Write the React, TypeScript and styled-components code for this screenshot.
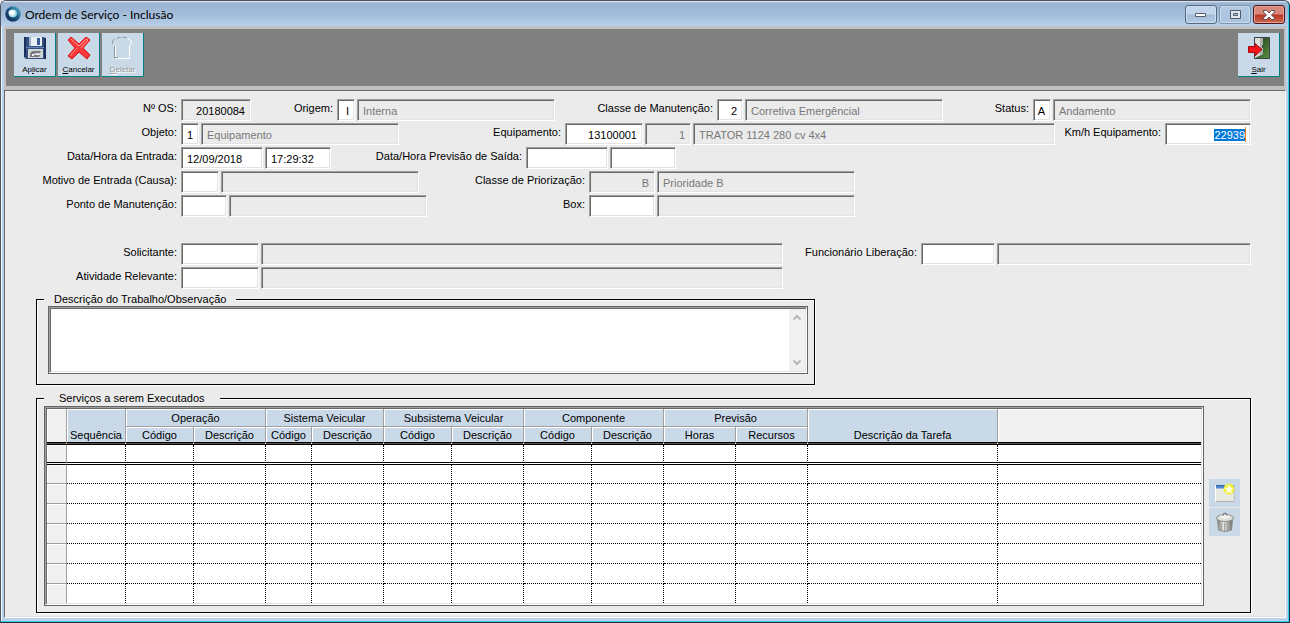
import React, { useEffect, useRef } from 'react';
import styled, { createGlobalStyle, css } from 'styled-components';

const color = {
  face: '#ebebeb',
  button: '#c9d9e8',
  strip: '#c0c0c0',
  toolbar: '#808080',
  shadow: '#a0a0a0',
  darkShadow: '#696969',
  light: '#e3e3e3',
};

const GlobalStyle = createGlobalStyle`
  * { box-sizing: border-box; }
  body { margin: 0; background: ${color.face}; }
  body, button, input, textarea { font: 11px/14px "Liberation Sans", Arial, sans-serif; color: #000; }
`;

const sunken = css`
  border: 1px solid;
  border-color: ${color.shadow} #fff #fff ${color.shadow};
  box-shadow: inset 1px 1px 0 ${color.darkShadow}, inset -1px -1px 0 ${color.light};
`;

/* ---------- window ---------- */

const Window = styled.div`
  min-height: 100vh;
  display: flex;
  flex-direction: column;
  border: 1px solid #4d5560;
  border-right-color: #20303c;
  border-bottom-color: #20303c;
  border-radius: 6px 6px 0 0;
  background: #b9d1ea;
  box-shadow: inset -1px -1px 0 #35cdee, inset 1px 0 0 #eef4fb;
  padding: 0 3px 4px 3px;
`;

const TitleBar = styled.header`
  display: flex;
  align-items: center;
  height: 25px;
  margin: 0 -2px 0 -3px;
  padding: 0 3px 0 4px;
  gap: 4px;
  border-radius: 5px 5px 0 0;
  background: linear-gradient(#e8eff7 0, #9ab3d1 2px, #a5bedb 60%, #b7d0ea);
`;

const Title = styled.h1`
  margin: 0;
  flex: 1;
  padding-top: 3px;
  font: 12px/16px Lato, "Open Sans", sans-serif;
`;

const Caption = styled.div`
  display: flex;
  gap: 2px;
  padding-top: 2px;
`;

const CaptionButton = styled.button<{ $tone?: 'close' | 'dim' }>`
  display: flex;
  align-items: center;
  justify-content: center;
  width: 32px;
  height: 19px;
  padding: 0;
  border: 1px solid ${p => (p.$tone === 'close' ? '#4f1418' : p.$tone === 'dim' ? '#7e93ad' : '#56697f')};
  border-radius: 3px;
  box-shadow: inset 0 0 0 1px ${p => (p.$tone === 'close' ? '#e3a39a' : '#c9dcf0')};
  background: ${p =>
    p.$tone === 'close'
      ? 'linear-gradient(#d8897c 0 48%, #b73422 52%, #cf6a50)'
      : p.$tone === 'dim'
      ? 'linear-gradient(#b3c9e3, #abc4e0)'
      : 'linear-gradient(#c3d5ea 0 48%, #a2bbd8 52%, #b6cde6)'};
`;

const Strip = styled.div`
  background: ${color.strip};
  padding: 3px 2px 4px;
`;

const Toolbar = styled.div`
  display: flex;
  gap: 2px;
  height: 57px;
  padding: 4px 4px 0 8px;
  background: ${color.toolbar};
`;

const ToolButton = styled.button<{ $end?: boolean }>`
  display: flex;
  flex-direction: column;
  align-items: center;
  width: 42px;
  height: 44px;
  margin-left: ${p => (p.$end ? 'auto' : '0')};
  padding: 3px 0 0;
  border: 0 solid #008080;
  border-width: 0 1px 1px 0;
  background: ${color.button};
  font-size: 8px;
  line-height: 10px;
  gap: 5px;
  &:disabled { color: #999; text-shadow: 1px 1px 0 #fff; }
`;

const Panel = styled.main`
  flex: 1;
  padding: 8px 34px 4px 31px;
  background: ${color.face};
  border: 1px solid;
  border-color: ${color.darkShadow} #fff #fff ${color.darkShadow};
  box-shadow: inset -1px -1px 0 ${color.light};
`;

/* ---------- form ---------- */

const Rows = styled.div`
  display: flex;
  flex-direction: column;
  gap: 2px;
`;

const Row = styled.div`
  display: flex;
  height: 22px;
`;

const Split = styled.div`
  display: grid;
  grid-template-columns: minmax(0, 1fr) 468px;
  row-gap: 2px;
  margin-top: 26px;
`;

const Group = styled.div<{ $end?: boolean; $grow?: boolean }>`
  display: flex;
  gap: 2px;
  margin-left: ${p => (p.$end ? 'auto' : '0')};
  flex: ${p => (p.$grow ? '1 1 0' : '0 0 auto')};
`;

const Label = styled.label<{ $w: number }>`
  width: ${p => p.$w}px;
  padding-right: 2px;
  line-height: 18px;
  text-align: right;
  white-space: nowrap;
`;

const Field = styled.input<{ $w?: number; $right?: boolean; $locked?: boolean }>`
  ${sunken}
  width: ${p => (p.$w ? `${p.$w}px` : '0')};
  flex: ${p => (p.$w ? '0 0 auto' : '1 1 0')};
  min-width: 0;
  height: 22px;
  margin: 0;
  padding: ${p => (p.$right ? '2px 5px 0 1px' : '2px 1px 0 5px')};
  border-radius: 0;
  outline: 0;
  background: ${p => (p.$locked ? color.face : '#fff')};
  line-height: 15px;
  text-align: ${p => (p.$right ? 'right' : 'left')};
  &:disabled { color: #787878; }
  &::selection { background: #0078d7; color: #fff; }
`;

const FocusField = styled(Field)`
  background: linear-gradient(#f58220, #f58220) right 4px center / 1px 15px no-repeat #fff;
`;

const Box = styled.fieldset<{ $rightGap?: number; $pad: string; $top: number }>`
  margin: ${p => p.$top}px ${p => p.$rightGap ?? 0}px 0 0;
  min-width: 0;
  padding: ${p => p.$pad};
  border: 1px solid #000;
  box-shadow: 1px 1px 0 #fff, inset 1px 1px 0 #fff;
`;

const Legend = styled.legend<{ $inset: number }>`
  height: 13px;
  padding: 0 ${p => p.$inset}px;
  background: ${color.face};
  line-height: 13px;
`;

const Frame = styled.div<{ $indent?: number }>`
  display: flex;
  flex: 1;
  min-width: 0;
  margin-left: ${p => p.$indent ?? 0}px;
  border: 1px solid #646464;
`;

const Well = styled.div`
  ${sunken}
  display: flex;
  flex: 1;
  min-width: 0;
  padding: 1px;
  background: #fff;
`;

const Notes = styled.textarea`
  flex: 1;
  height: 62px;
  border: 0;
  padding: 2px 4px;
  resize: none;
  outline: 0;
  overflow: hidden;
`;

const Scroll = styled.div`
  display: flex;
  flex-direction: column;
  justify-content: space-between;
  align-items: center;
  width: 16px;
  padding: 5px 0;
  background: #f0f0f0;
`;

/* ---------- grid ---------- */

const GridArea = styled.div`
  display: flex;
  gap: 5px;
`;

const SideButtons = styled.div`
  display: flex;
  flex-direction: column;
  gap: 1px;
  padding-top: 73px;
`;

const SideButton = styled.button`
  display: flex;
  align-items: center;
  justify-content: center;
  width: 31px;
  height: 28px;
  padding: 0;
  border: 0;
  background: ${color.button};
`;

const Table = styled.table`
  width: 100%;
  table-layout: fixed;
  border-spacing: 0;
  th, td { padding: 0; font-weight: normal; overflow: hidden; white-space: nowrap; }
`;

const Head = styled.th<{ $last?: boolean; $blank?: boolean; $low?: boolean }>`
  --fill: ${p => (p.$blank ? '#f0f0f0' : color.button)};
  height: 18px;
  line-height: 14px;
  border-right: ${p => (p.$blank && p.$low ? '0' : `1px solid ${color.shadow}`)};
  border-bottom: ${p => (p.$last ? '3px double #000' : `1px solid ${color.shadow}`)};
  background: linear-gradient(var(--fill), var(--fill)) padding-box, linear-gradient(#5c5048, #5c5048) border-box;
  box-shadow: inset 1px 1px 0 #fff;
  vertical-align: ${p => (p.$low ? 'bottom' : 'middle')};
`;

const RowHead = styled.th<{ $current?: boolean; $h: number }>`
  height: ${p => p.$h}px;
  background: #f0f0f0;
  border-right: 1px solid ${color.shadow};
  border-bottom: ${p => (p.$current ? '3px double #000' : `1px solid ${color.shadow}`)};
  box-shadow: inset 1px 1px 0 #fff;
  tr:last-child > & { border-bottom: 0; }
`;

const Cell = styled.td<{ $current?: boolean }>`
  border-right: 1px dotted #000;
  border-bottom: ${p => (p.$current ? '3px double #000' : '1px dotted #000')};
  &:last-child { border-right: 0; }
  tr:last-child > & { border-bottom: 0; }
`;

/* ---------- icons ---------- */

const AppIcon = () => (
  <svg width="16" height="16" viewBox="0 0 16 16" aria-hidden="true">
    <defs>
      <linearGradient id="ring" x1="0" y1="1" x2="1" y2="0">
        <stop offset="0" stopColor="#0b1f4d" />
        <stop offset=".55" stopColor="#1f5a86" />
        <stop offset="1" stopColor="#5cc0d6" />
      </linearGradient>
      <radialGradient id="core" cx=".4" cy=".4" r=".6">
        <stop offset=".3" stopColor="#fff" />
        <stop offset="1" stopColor="#7fd0e0" />
      </radialGradient>
    </defs>
    <circle cx="8" cy="8" r="7.7" fill="url(#ring)" />
    <path d="M3.500 5.500Q5 3 8.500 3.500Q12 4 12 7.500Q12 11 8.500 11.500Q5 11.500 4 9Q3.200 7 3.500 5.500Z" fill="url(#core)" />
  </svg>
);

const SaveIcon = () => (
  <svg width="24" height="24" viewBox="0 0 24 24" aria-hidden="true">
    <path d="M1 1h20l2 2v20H3l-2-2z" fill="#33507f" />
    <path d="M1 1h2v20H1zM21 2h2v21h-2z" fill="#1d2f5c" />
    <path d="M6 1h13v9H6z" fill="#e9edf4" />
    <path d="M6 1h2v9H6z" fill="#9fb0cb" />
    <path d="M14 2h3v7h-3z" fill="#3a5c93" />
    <path d="M3 11h18v1H3z" fill="#6583b4" />
    <path d="M5 13h15v9H5z" fill="#d0d3d5" />
    <path d="M7 20c0-4 2-5 4-5h7l-1 2h-5l-2 2h7l-1 2H7z" fill="#77797c" />
    <path d="M9 18h2v2H9zM13 18h3v1h-3z" fill="#f5f5f5" />
  </svg>
);

const CancelIcon = () => (
  <svg width="24" height="24" viewBox="0 0 24 24" aria-hidden="true">
    <path
      d="M4 1L12 8L19 1L23 4L16 12L23 19L20 23L12 16L5 23L1 20L8 12L1 4Z"
      fill="#fb3b3b"
      stroke="#d90d12"
      strokeLinejoin="round"
    />
    <path d="M4 3L12 10L19 3L21 4L14 12" fill="none" stroke="#ff9b96" />
    <path d="M10 12L3 20" fill="none" stroke="#ff8580" />
  </svg>
);

const DeleteIcon = () => (
  <svg width="24" height="24" viewBox="0 0 24 24" fill="none" aria-hidden="true">
    <path d="M3.500 22V9.500L1.500 7.500V5L4 2.500M3.500 21.500H7" stroke="#8f979e" />
    <path d="M6 2.500L8 1.500H17" stroke="#8f979e" strokeDasharray="4 2" />
    <path d="M17 2.500L20 4.500V8.500L18.500 10V22.500H5M2.500 8L4.500 10V21" stroke="#fff" />
  </svg>
);

const ExitIcon = () => (
  <svg width="24" height="24" viewBox="0 0 24 24" aria-hidden="true">
    <defs>
      <linearGradient id="glass" x1="0" y1="0" x2="1" y2="1">
        <stop offset="0" stopColor="#16301a" />
        <stop offset="1" stopColor="#5c9440" />
      </linearGradient>
    </defs>
    <path d="M7.500 1.500h15v21h-15z" fill="url(#glass)" stroke="#3d4147" />
    <path d="M8 2h8v16l-8 4z" fill="#dcdcd8" />
    <path d="M13 2h3v16l-3 1z" fill="#aeb0ae" />
    <path d="M15 9h1v3h-1z" fill="#4c4c4c" />
    <path d="M1.500 10.500H8V7.500L15 13.500L8 20V16.500H1.500Z" fill="#f3151a" stroke="#a30a10" />
  </svg>
);

const NewIcon = () => (
  <svg width="20" height="20" viewBox="0 0 20 20" aria-hidden="true">
    <path d="M.5 2.500h18v16H.5z" fill="#e9e9e4" stroke="#fff" />
    <path d="M1 18.500h18V3" fill="none" stroke="#b3b3ad" />
    <path d="M1 2h18v3.500H1z" fill="#4e86cf" />
    <path d="M1 2h12v1H1z" fill="#2f62ad" />
    <circle cx="14" cy="6" r="5.500" fill="#f2ef3c" />
    <path d="M14 1.500L15.400 4.500L18.500 5L16.200 7.200L16.800 10.500L14 9L11.200 10.500L11.800 7.200L9.500 5L12.600 4.500Z" fill="#fffee0" />
  </svg>
);

const TrashIcon = () => (
  <svg width="20" height="22" viewBox="0 0 20 22" aria-hidden="true">
    <defs>
      <linearGradient id="tin">
        <stop offset="0" stopColor="#7d7d7b" />
        <stop offset=".4" stopColor="#e4e4e1" />
        <stop offset="1" stopColor="#6d6d6b" />
      </linearGradient>
    </defs>
    <path d="M2.500 8h15l-1 11q-6.500 3-13 0z" fill="url(#tin)" stroke="#8a8a88" />
    <path d="M6.500 12v7M9.500 12v8M12.500 12v7" stroke="#a5a5a2" />
    <ellipse cx="10" cy="7" rx="8.500" ry="3.500" fill="#dededb" stroke="#8b8b88" />
    <ellipse cx="10" cy="5.500" rx="5" ry="2" fill="#f2f2f0" />
    <path d="M8 5V3q2-2 4 0v2" fill="none" stroke="#70706e" />
  </svg>
);

const Chevron = ({ down }: { down?: boolean }) => (
  <svg width="8" height="7" viewBox="0 0 8 7" fill="none" aria-hidden="true">
    <path d={down ? 'M.5 1.500L4 5L7.500 1.500' : 'M.5 5.500L4 2L7.500 5.500'} stroke="#b8b8b8" strokeWidth="2" />
  </svg>
);

/* ---------- data ---------- */

const columnWidths = [20, 59, 68, 72, 46, 72, 68, 72, 68, 72, 72, 72, 190];

const bands: [string, string, string][] = [
  ['Operação', 'Código', 'Descrição'],
  ['Sistema Veicular', 'Código', 'Descrição'],
  ['Subsistema Veicular', 'Código', 'Descrição'],
  ['Componente', 'Código', 'Descrição'],
  ['Previsão', 'Horas', 'Recursos'],
];

const rowHeights = [20, 19, 20, 20, 20, 20, 20, 19];

type Part = { w?: number; value?: string; right?: boolean; locked?: boolean; disabled?: boolean; focus?: boolean };

function Entry({ id, label, labelWidth, parts, end, grow }: {
  id: string; label: string; labelWidth: number; parts: Part[]; end?: boolean; grow?: boolean;
}) {
  const focused = useRef<HTMLInputElement>(null);
  useEffect(() => {
    focused.current?.focus();
    focused.current?.select();
  }, []);
  return (
    <Group $end={end} $grow={grow}>
      <Label $w={labelWidth} htmlFor={`${id}-0`}>{label}</Label>
      {parts.map((p, i) => {
        const Control = p.focus ? FocusField : Field;
        return (
          <Control
            key={i}
            id={`${id}-${i}`}
            ref={p.focus ? focused : undefined}
            aria-label={i ? `${label} ${i + 1}` : undefined}
            defaultValue={p.value ?? ''}
            readOnly={p.locked}
            disabled={p.disabled}
            $w={p.w}
            $right={p.right}
            $locked={p.locked || p.disabled}
          />
        );
      })}
    </Group>
  );
}

export default function App() {
  return (
    <Window>
      <GlobalStyle />
      <TitleBar>
        <AppIcon />
        <Title>Ordem de Serviço - Inclusão</Title>
        <Caption>
          <CaptionButton aria-label="Minimizar">
            <svg width="12" height="6" viewBox="0 0 12 6"><path d="M.5 1.500h10v3H.5z" fill="#fff" stroke="#555c68" /></svg>
          </CaptionButton>
          <CaptionButton $tone="dim" aria-label="Maximizar">
            <svg width="11" height="9" viewBox="0 0 11 9" fill="none">
              <path d="M.5 .5h10v8H.5z" fill="#dfe6ee" stroke="#535b6b" />
              <path d="M3.500 3.500h4v2h-4z" fill="#b0c6e0" stroke="#535b6b" />
            </svg>
          </CaptionButton>
          <CaptionButton $tone="close" aria-label="Fechar">
            <svg width="12" height="10" viewBox="0 0 12 10">
              <path d="M.5 .5h3L6 3L8.500 .5h3V2L8.500 5L11.500 8v1.500h-3L6 7L3.500 9.500h-3V8L3.500 5L.5 2Z" fill="#fff" stroke="#5a4a50" />
            </svg>
          </CaptionButton>
        </Caption>
      </TitleBar>

      <Strip>
        <Toolbar>
          <ToolButton><SaveIcon /><span>Ap<u>l</u>icar</span></ToolButton>
          <ToolButton><CancelIcon /><span><u>C</u>ancelar</span></ToolButton>
          <ToolButton disabled><DeleteIcon /><span><u>D</u>eletar</span></ToolButton>
          <ToolButton $end><ExitIcon /><span><u>S</u>air</span></ToolButton>
        </Toolbar>
      </Strip>

      <Panel>
        <Rows>
          <Row>
            <Entry id="os" label="Nº OS:" labelWidth={143} parts={[{ w: 70, value: '20180084', right: true, locked: true }]} />
            <Entry id="origem" label="Origem:" labelWidth={84} parts={[{ w: 18, value: 'I', right: true }, { w: 198, value: 'Interna', disabled: true }]} />
            <Entry id="classe" label="Classe de Manutenção:" labelWidth={160} parts={[{ w: 26, value: '2', right: true }, { w: 198, value: 'Corretiva Emergêncial', disabled: true }]} />
            <Entry id="status" end label="Status:" labelWidth={80} parts={[{ w: 18, value: 'A', right: true }, { w: 198, value: 'Andamento', disabled: true }]} />
          </Row>
          <Row>
            <Entry id="objeto" label="Objeto:" labelWidth={143} parts={[{ w: 18, value: '1', right: true }, { w: 198, value: 'Equipamento', disabled: true }]} />
            <Entry id="equip" grow label="Equipamento:" labelWidth={164} parts={[{ w: 78, value: '13100001', right: true }, { w: 46, value: '1', right: true, disabled: true }, { value: 'TRATOR 1124 280 cv 4x4', disabled: true }]} />
            <Entry id="km" label="Km/h Equipamento:" labelWidth={108} parts={[{ w: 86, value: '22939', right: true, focus: true }]} />
          </Row>
          <Row>
            <Entry id="entrada" label="Data/Hora da Entrada:" labelWidth={143} parts={[{ w: 82, value: '12/09/2018' }, { w: 66, value: '17:29:32' }]} />
            <Entry id="saida" label="Data/Hora Previsão de Saída:" labelWidth={193} parts={[{ w: 82 }, { w: 66 }]} />
          </Row>
          <Row>
            <Entry id="motivo" label="Motivo de Entrada (Causa):" labelWidth={143} parts={[{ w: 38 }, { w: 198, disabled: true }]} />
            <Entry id="prioridade" label="Classe de Priorização:" labelWidth={168} parts={[{ w: 66, value: 'B', right: true, disabled: true }, { w: 198, value: 'Prioridade B', disabled: true }]} />
          </Row>
          <Row>
            <Entry id="ponto" label="Ponto de Manutenção:" labelWidth={143} parts={[{ w: 46 }, { w: 198, disabled: true }]} />
            <Entry id="box" label="Box:" labelWidth={160} parts={[{ w: 66 }, { w: 198, disabled: true }]} />
          </Row>
        </Rows>

        <Split>
          <Entry id="solicitante" grow label="Solicitante:" labelWidth={143} parts={[{ w: 78 }, { disabled: true }]} />
          <Entry id="liberacao" grow label="Funcionário Liberação:" labelWidth={136} parts={[{ w: 74 }, { disabled: true }]} />
          <Entry id="atividade" grow label="Atividade Relevante:" labelWidth={143} parts={[{ w: 78 }, { disabled: true }]} />
        </Split>

        <Box $top={4} $rightGap={436} $pad="0 6px 10px 7px">
          <Legend $inset={10}>Descrição do Trabalho/Observação</Legend>
          <Frame $indent={4}>
            <Well>
              <Notes aria-label="Descrição do Trabalho/Observação" />
              <Scroll><Chevron /><Chevron down /></Scroll>
            </Well>
          </Frame>
        </Box>

        <Box $top={7} $pad="1px 10px 6px 7px">
          <Legend $inset={15}>Serviços a serem Executados</Legend>
          <GridArea>
            <Frame>
              <Well>
                <Table>
                  <colgroup>
                    {columnWidths.map((w, i) => <col key={i} width={w} />)}
                    <col />
                  </colgroup>
                  <thead>
                    <tr>
                      <Head rowSpan={2} $blank $last />
                      <Head rowSpan={2} $last $low>Sequência</Head>
                      {bands.map(b => <Head key={b[0]} colSpan={2}>{b[0]}</Head>)}
                      <Head rowSpan={2} $last $low>Descrição da Tarefa</Head>
                      <Head rowSpan={2} $blank $last $low />
                    </tr>
                    <tr>
                      {bands.map(b => b.slice(1).map(t => <Head key={b[0] + t} $last>{t}</Head>))}
                    </tr>
                  </thead>
                  <tbody>
                    {rowHeights.map((h, r) => (
                      <tr key={r}>
                        <RowHead $h={h} $current={r === 0} />
                        {Array.from({ length: 13 }, (_, c) => <Cell key={c} $current={r === 0} />)}
                      </tr>
                    ))}
                  </tbody>
                </Table>
              </Well>
            </Frame>
            <SideButtons>
              <SideButton aria-label="Incluir serviço"><NewIcon /></SideButton>
              <SideButton aria-label="Remover serviço"><TrashIcon /></SideButton>
            </SideButtons>
          </GridArea>
        </Box>
      </Panel>
    </Window>
  );
}
